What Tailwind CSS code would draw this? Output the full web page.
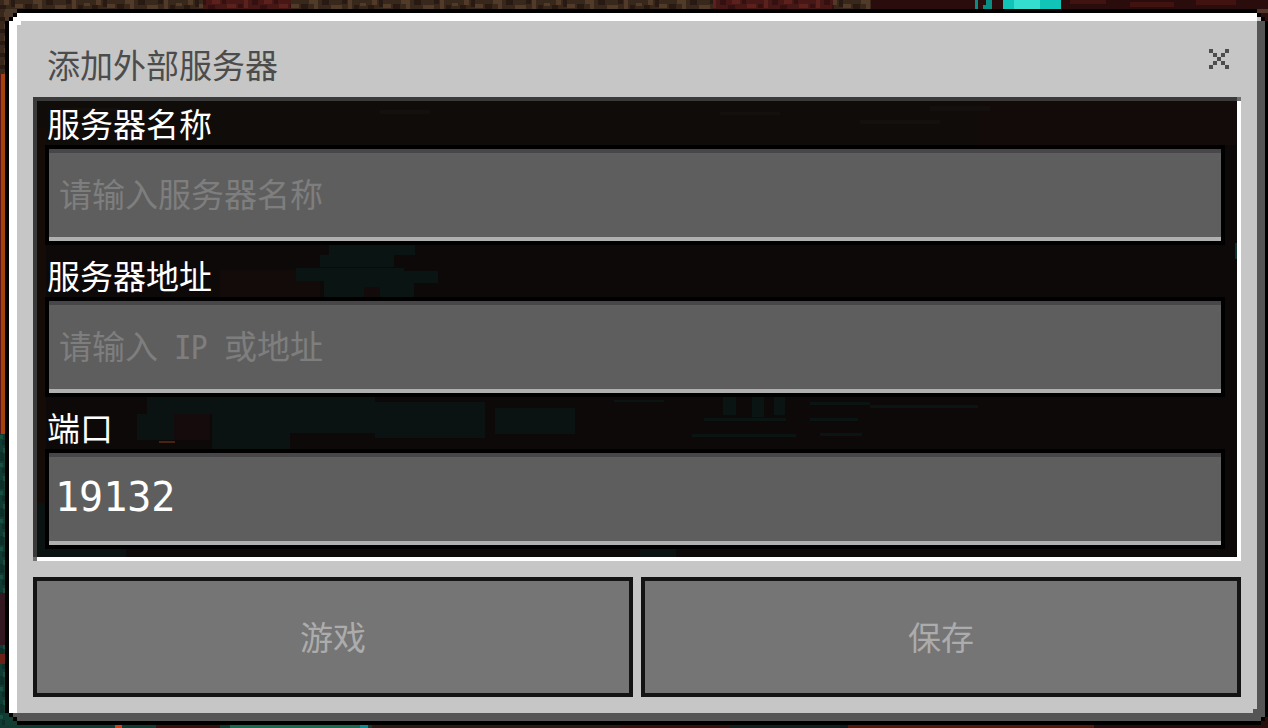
<!DOCTYPE html>
<html lang="zh-CN">
<head>
<meta charset="utf-8">
<meta name="viewport" content="width=device-width, initial-scale=1">
<title>添加外部服务器</title>
<script src="https://cdn.jsdelivr.net/npm/@tailwindcss/browser@4"></script>
</head>
<body class="relative h-screen overflow-hidden bg-[#101c1b] font-['Noto_Sans_Mono_CJK_SC','Noto_Sans_CJK_SC',sans-serif] font-light text-[33px]">
<!-- Nether landscape visible around the dialog -->
<svg class="absolute inset-0 h-full w-full" viewBox="0 0 1268 728" preserveAspectRatio="none" shape-rendering="crispEdges" aria-hidden="true">
  <defs>
    <pattern id="stone" width="92" height="12" patternUnits="userSpaceOnUse">
      <path fill="#38271b" d="M0 0h92v12H0z"/><path fill="#513a28" d="M4 0h5v5H4zM15 4h8v4h-8zM33 0h9v4h-9zM38 4h4v6h-4zM55 5h11v4H55zM72 0h4v9h-4zM84 3h6v3h-6z"/><path fill="#281a12" d="M0 5h6v4H0zM11 0h4v7h-4zM25 4h7v5h-7zM46 0h7v5h-7zM66 0h5v4h-5zM78 5h5v4h-5z"/>
    </pattern>
    <pattern id="red" width="52" height="12" patternUnits="userSpaceOnUse">
      <path fill="#471716" d="M0 0h52v12H0z"/><path fill="#5d211d" d="M4 0h8v4H4zM19 4h9v4h-9zM36 0h4v8h-4z"/><path fill="#351010" d="M0 5h7v4H0zM14 0h4v4h-4zM30 4h5v4h-5zM44 0h6v5h-6z"/>
    </pattern>
    <pattern id="moss" width="12" height="28" patternUnits="userSpaceOnUse">
      <path fill="#103b32" d="M0 0h12v28H0z"/><path fill="#0d2f29" d="M0 4h4v9H0zM2 20h3v5H2z"/><path fill="#175040" d="M3 0h3v5H3zM0 15h3v4H0z"/>
    </pattern>
  </defs>
  <path fill="url(#stone)" d="M0 0h1268v74H0z"/>
  <path fill="url(#red)" d="M203 0h88v9h-88zM713 0h120v9H713z"/>
  <path fill="#2b0c0c" d="M871 0h397v728H871z"/>
  <path fill="#401311" d="M1070 0h36v4h-36zM1130 2h44v5h-44zM1196 0h40v5h-40z"/>
  <path fill="#098c84" d="M975 0h3v9h-3zM983 5h3v4h-3zM986 0h6v9h-6z"/>
  <path fill="#11c4b8" d="M1003 0h58v9h-58z"/><path fill="#35dfcf" d="M1014 0h26v9h-26z"/>
  <path fill="#5a1316" d="M0 74h1v360H0z"/><path fill="#a5430c" d="M1 74h4v360H1z"/>
  <path fill="url(#moss)" d="M0 434h6v294H0z"/>
  <path fill="#321721" d="M0 593h5v52H0z"/><path fill="#6d2116" d="M0 654h5v10H0z"/>
  <path fill="#133a31" d="M0 725h380v3H0z"/><path fill="#d2401a" d="M115 725h7v3h-7z"/><path fill="#38100e" d="M156 725h64v3h-64zM620 725h110v3H620z"/>
  <path fill="#1b6a4f" d="M230 725h130v3H230z"/><path fill="#0b8c94" d="M360 725h8v3h-8z"/><path fill="#2d1a12" d="M372 725h248v3H372z"/>
  <path fill="#12211e" d="M730 725h110v3H730z"/><path fill="#54180c" d="M848 725h246v3H848z"/>
</svg>

<div class="relative h-full pt-[9px] pb-[3px] pl-[5px]">
  <main class="relative h-full border-y-4 border-l-4 border-r-[3px] border-black">
    <!-- stepped frame corners -->
    <svg class="absolute -top-1 -left-1 h-4 w-4" viewBox="0 0 4 4" shape-rendering="crispEdges" aria-hidden="true"><path fill="#fff" d="M0 0h4v4H0z"/><path fill="#4a382a" d="M0 0h3v1H2v1H1v1H0z"/><path d="M3 0h1v1H3zM2 1h1v1H2zM1 2h1v1H1zM0 3h1v1H0z"/></svg>
    <svg class="absolute -top-1 -right-[3px] h-3 w-[11px]" viewBox="0 0 11 12" shape-rendering="crispEdges" aria-hidden="true"><path fill="#51372a" d="M0 0h11v12H0z"/><path fill="#2b0c0c" d="M4 4h7v8H4z"/><path d="M0 4h4v4H0zM4 8h4v4H4z"/><path fill="#c6c6c6" d="M0 8h4v4H0z"/></svg>
    <svg class="absolute -bottom-1 -left-1 z-10 h-3 w-3" viewBox="0 0 3 3" shape-rendering="crispEdges" aria-hidden="true"><path fill="#123d33" d="M0 0h3v3H0z"/><path fill="#555" d="M2 0h1v1H2z"/><path d="M1 0h1v1H1zM2 1h1v1H2z"/></svg>
    <svg class="absolute -right-[3px] -bottom-1 z-10 h-4 w-[15px]" viewBox="0 0 15 16" shape-rendering="crispEdges" aria-hidden="true"><path fill="#555" d="M0 0h12v12H0z"/><path fill="#000" d="M0 12h8v4H0zM8 8h4v4H8zM12 0h3v8h-3z"/><path fill="#2b0c0c" d="M12 8h3v8H8v-4h4z"/></svg>
    <div class="flex h-full flex-col border-8 border-t-white border-r-[#555] border-b-[#555] border-l-white bg-[#c6c6c6] px-4 pb-4">
      <header class="flex h-19 shrink-0 items-center justify-between pr-2 pl-3.5">
        <h1 class="pt-2.5 leading-11 text-[#4c4c4c]">添加外部服务器</h1>
        <button type="button" aria-label="关闭" class="flex h-7 w-7 items-center justify-center text-[#4c4c4c]">
          <svg class="h-5 w-5" viewBox="0 0 5 5" shape-rendering="crispEdges" fill="currentColor" aria-hidden="true"><path d="M0 0h1v1H0zM4 0h1v1H4zM1 1h1v1H1zM3 1h1v1H3zM2 2h1v1H2zM1 3h1v1H1zM3 3h1v1H3zM0 4h1v1H0zM4 4h1v1H4z"/></svg>
        </button>
      </header>
      <form id="server" class="relative min-h-0 flex-1 border-4 border-t-[#3a3a3a] border-r-white border-b-white border-l-[#3a3a3a] bg-[#0d0909]">
        <span class="absolute -top-1 -right-1 h-1 w-1 bg-[#6f6f6f]"></span>
        <span class="absolute -bottom-1 -left-1 h-1 w-1 bg-[#6f6f6f]"></span>
        <!-- dimmed landscape behind the fields -->
        <svg class="absolute inset-0 h-full w-full" viewBox="37 101 1200 456" preserveAspectRatio="none" shape-rendering="crispEdges" aria-hidden="true">
          <path fill="#0f0c0a" d="M37 101h940v44H37z"/><path fill="#120b0a" d="M977 101h260v44H977zM220 270h100v27H220z"/>
          <path fill="#160c07" d="M37 128h9v375h-9z"/>
          <path fill="#13100d" d="M60 108h60v3H60zM380 110h50v4h-50zM720 112h60v3h-60zM860 120h80v4h-80zM930 106h60v5h-60z"/>
          <path fill="#0a1412" d="M329 245h86v10h-86zM320 255h74v12h-74zM296 268h108v13H296zM404 271h34v12h-34zM324 281h90v16h-90z"/>
          <path fill="#120a0b" d="M364 287h16v10h-16z"/>
          <path fill="#0a1311" d="M147 397h140v17H147zM137 414h70v26h-70zM212 397h78v52h-78zM290 397h85v36h-85zM375 402h110v36H375zM495 408h80v26h-80z"/>
          <path fill="#150a0c" d="M174 414h36v26h-36z"/><path fill="#462312" d="M159 441h16v2h-16z"/>
          <path fill="#0a1513" d="M723 397h13v18h-13zM752 397h12v20h-12zM774 397h11v18h-11zM704 418h82v3h-82zM810 402h60v3h-60zM870 405h108v3H870zM810 418h48v3h-48zM692 434h104v3H692zM820 433h42v3h-42zM614 400h50v2h-50z"/>
          <path fill="#0a1312" d="M37 503h9v54h-9zM46 549h80v8H46zM640 549h36v8h-36z"/><path fill="#0a3432" d="M1235 243h2v16h-2z"/>
        </svg>
        <div class="relative pr-3 pl-2">
          <label for="name" class="flex h-11 items-end pl-0.5 leading-11 text-white">服务器名称</label>
          <input id="name" type="text" placeholder="请输入服务器名称" class="block h-25 w-full rounded-none border-4 border-black bg-[#5e5e5e] px-2.5 pb-1 text-white shadow-[inset_0_4px_#484648,inset_0_-4px_#b1b0b1] outline-none placeholder:text-[#7e7e7e]">
          <label for="address" class="flex h-13 items-end pl-0.5 leading-11 text-white">服务器地址</label>
          <input id="address" type="text" placeholder="请输入 IP 或地址" class="block h-25 w-full rounded-none border-4 border-black bg-[#5e5e5e] px-2.5 pb-1 text-white shadow-[inset_0_4px_#484648,inset_0_-4px_#b1b0b1] outline-none placeholder:text-[#7e7e7e]">
          <label for="port" class="flex h-13 items-end pl-0.5 leading-11 text-white">端口</label>
          <input id="port" type="text" inputmode="numeric" value="19132" class="block h-25 w-full rounded-none border-4 border-black bg-[#5e5e5e] px-1.5 pb-1 font-['DejaVu_Sans_Mono',monospace] text-[40px] font-normal text-white shadow-[inset_0_4px_#484648,inset_0_-4px_#b1b0b1] outline-none">
        </div>
      </form>
      <div class="mt-4 grid h-30 shrink-0 grid-cols-2 gap-2">
        <button type="button" class="border-4 border-[#141414] bg-[#757575] text-[#acacac]">游戏</button>
        <button type="submit" form="server" class="border-4 border-[#141414] bg-[#757575] text-[#acacac]">保存</button>
      </div>
    </div>
  </main>
</div>
</body>
</html>
